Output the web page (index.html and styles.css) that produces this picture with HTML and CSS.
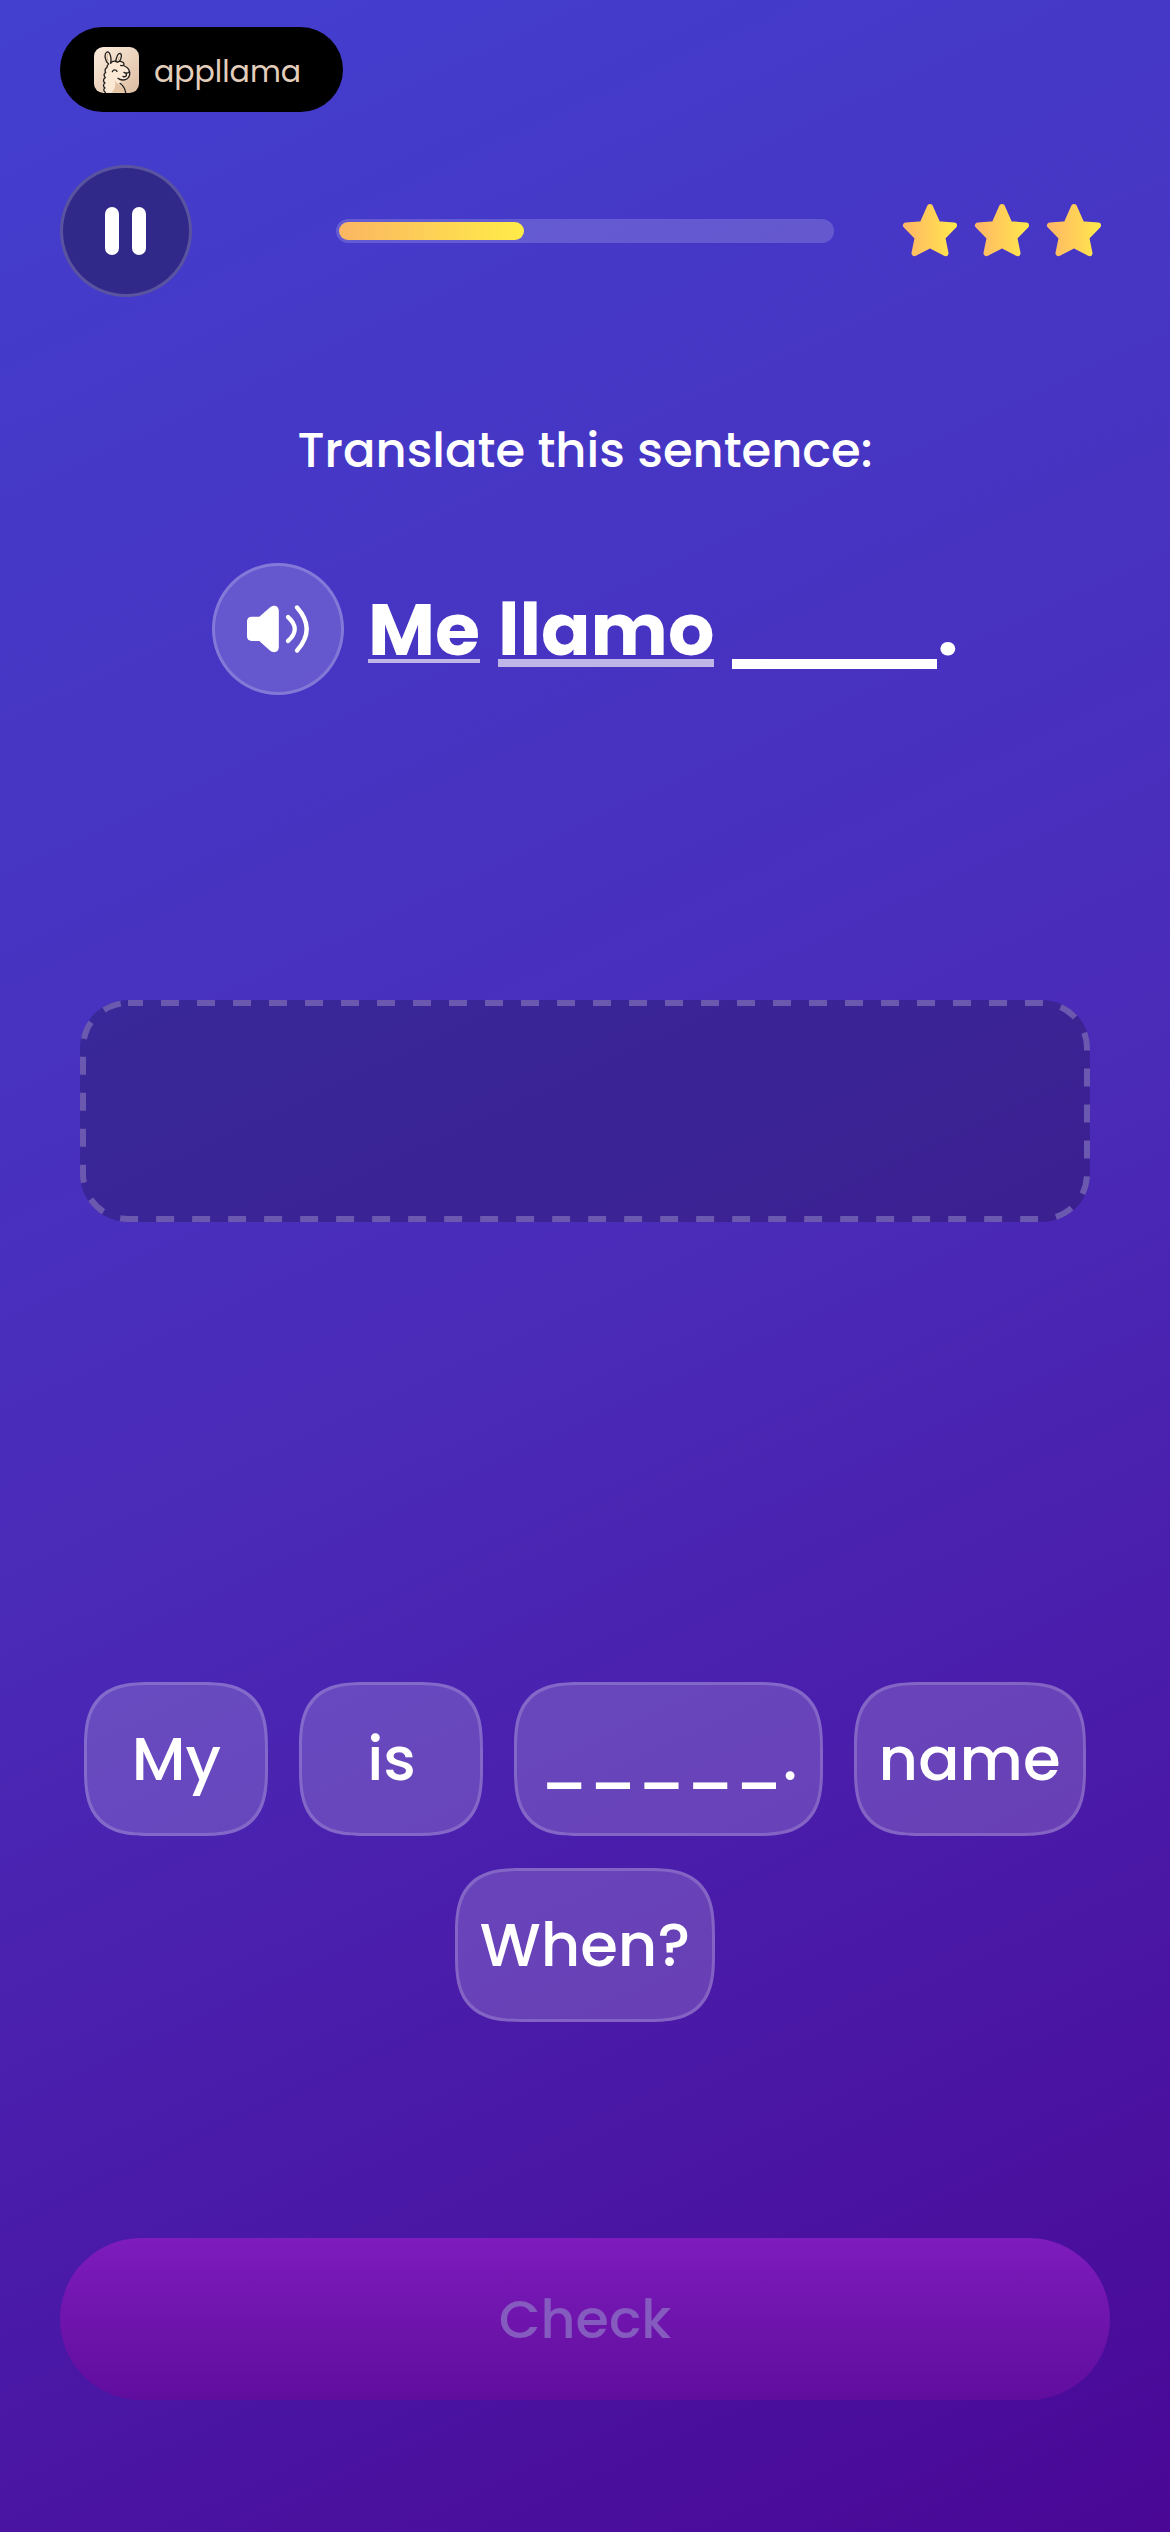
FILE: index.html
```
<!DOCTYPE html>
<html lang="en">
<head>
    <meta charset="UTF-8">
    <meta name="viewport" content="width=device-width, initial-scale=1.0">
    <title>Translate this sentence</title>
    <link rel="stylesheet" href="styles.css">
</head>
<body>
    <div class="badge">
        <svg class="badge-icon" viewBox="160 107 135 138" aria-hidden="true">
            <defs>
                <linearGradient id="cream" x1="0" y1="0" x2="1" y2="1">
                    <stop offset="0" stop-color="#fdeedf"/>
                    <stop offset="1" stop-color="#dcbc9f"/>
                </linearGradient>
            </defs>
            <rect x="160" y="107" width="135" height="138" rx="28" fill="url(#cream)"/>
            <path d="M191 244c-6-7-2-12 1-14c-7-6-4-13 0-16c-7-6-4-13 1-16c-6-6-4-13 1-15c-4-8 0-14 4-16c0-5 2-8 5-10c-10-8-14-28-4-34c9-4 14 18 11 31c5-3 10-3 15-3c2-11 7-25 14-24c7 2 3 18-2 24c9 1 15 6 12 12c10 3 20 16 17 28c-3 12-15 16-25 14c-5 10 11 18 13 39z" fill="#fbe9d6"/>
            <path d="M221 207c8 12 26 14 33 37h-42c12-12 15-24 9-37z" fill="#e3c3a3"/>
            <g fill="none" stroke="#22201f" stroke-width="4" stroke-linecap="round" stroke-linejoin="round">
                <path d="M194 243c-7-5-5-11-1-13c-7-5-5-12 0-15c-7-5-5-13 1-16c-6-6-4-13 1-15c-4-8 0-14 4-16c0-5 2-8 5-10c-11-8-15-31-5-36c9-3 14 19 11 33"/>
                <path d="M225 151c2-12 7-25 13-25c7 2 4 16-1 23"/>
                <path d="M210 155c6-7 16-7 20-2c7-6 20-2 20 5c0 5-6 6-10 4"/>
                <path d="M251 164c10 4 17 13 16 25c-1 11-10 17-20 17c-7 0-12-2-15-5"/>
                <path d="M215 181c3-7 11-7 14-1M250 183c5 3 11 3 15-1M257 185v8c-3 3-7 4-10 2"/>
                <path d="M238 216c9 7 15 16 17 27"/>
            </g>
            <path d="M202 148c-4-8-4-15-1-19M232 148c1-7 3-11 6-13" fill="none" stroke="#cfa98a" stroke-width="3" stroke-linecap="round"/>
        </svg>
        <span class="badge-name">appllama</span>
    </div>

    <header class="topbar">
        <button class="round-button round-button-dark" type="button" aria-label="Pause">
            <svg class="pause-icon" viewBox="0 0 42 48" aria-hidden="true">
                <rect x="0" y="0" width="14" height="48" rx="7" fill="#fff"/>
                <rect x="27" y="0" width="14" height="48" rx="7" fill="#fff"/>
            </svg>
        </button>
        <div class="progress" role="progressbar" aria-label="Lesson progress" aria-valuenow="37" aria-valuemin="0" aria-valuemax="100">
            <div class="progress-fill" style="width: 37.5%"></div>
        </div>
        <div class="stars" role="img" aria-label="3 stars">
            <svg class="star" viewBox="0 0 72 72">
                <defs>
                    <linearGradient id="gold" gradientUnits="userSpaceOnUse" x1="9" y1="0" x2="63" y2="0">
                        <stop offset="0" stop-color="#ffb566"/>
                        <stop offset="1" stop-color="#ffe94b"/>
                    </linearGradient>
                    <path id="star-shape" d="M36 12L43.600 29.200L60 30.500L48.300 42.500L51.500 58.200L36 50.200L20.500 58.200L23.700 42.500L12 30.500L28.400 29.200Z" fill="url(#gold)" stroke="url(#gold)" stroke-width="6" stroke-linejoin="round"/>
                </defs>
                <use href="#star-shape"/>
            </svg>
            <svg class="star" viewBox="0 0 72 72"><use href="#star-shape"/></svg>
            <svg class="star" viewBox="0 0 72 72"><use href="#star-shape"/></svg>
        </div>
    </header>

    <main class="lesson">
        <h1 class="prompt">Translate this sentence:</h1>

        <div class="sentence">
            <button class="round-button" type="button" aria-label="Listen">
                <svg class="sound-icon" viewBox="141 195 187 144" aria-hidden="true">
                    <path d="M155 230h23l32-28c12-10 27-5 27 10v110c0 15-15 19-27 10l-32-29h-23c-9 0-14-5-14-14v-45c0-9 5-14 14-14z" fill="#fff"/>
                    <path d="M265 231q40 36 0 72M292 202q58 65 0 130" fill="none" stroke="#fff" stroke-width="13" stroke-linecap="round"/>
                </svg>
            </button>
            <p class="words">
                <span class="word">Me</span>
                <span class="word word-new">llamo</span>
                <span class="blank" role="img" aria-label="blank"></span>
                <span>.</span>
            </p>
        </div>

        <div class="answer">
            <svg class="answer-outline" aria-hidden="true"><rect class="answer-dashes" x="3" y="3" rx="45"/></svg>
        </div>

        <div class="bank">
            <button class="chip" type="button">My</button>
            <button class="chip" type="button">is</button>
            <button class="chip" type="button">_____.</button>
            <button class="chip" type="button">name</button>
            <button class="chip" type="button">When?</button>
        </div>
    </main>

    <button class="check" type="button" disabled>Check</button>
</body>
</html>
```
FILE: styles.css
```
* {
    box-sizing: border-box;
}
body {
    display: flex;
    flex-direction: column;
    min-height: 100vh;
    margin: 0;
    padding: 27px 60px 132px;
    font-family: Poppins, Inter, sans-serif;
    font-weight: 500;
    color: #fff;
    background: linear-gradient(155deg, #433fcf 0%, #4a2cb9 50%, #4a0796 100%);
}
button {
    padding: 0;
    border: none;
    font-family: inherit;
    font-weight: inherit;
    color: inherit;
    cursor: pointer;
}
h1, p {
    margin: 0;
}
svg {
    display: block;
}

.badge {
    display: flex;
    align-items: center;
    align-self: flex-start;
    gap: 15px;
    height: 85px;
    padding: 0 42px 0 34px;
    border-radius: 43px;
    background: #000;
}
.badge-icon {
    width: 45px;
    height: 46px;
}
.badge-name {
    padding-top: 4px;
    font-weight: 400;
    font-size: 30px;
    line-height: 48px;
    color: #e3cdbb;
}

.topbar {
    display: flex;
    align-items: center;
    margin-top: 53px;
}
.round-button {
    display: flex;
    flex: none;
    align-items: center;
    justify-content: center;
    width: 132px;
    height: 132px;
    border: 3px solid rgba(255, 255, 255, 0.2);
    border-radius: 50%;
    background: rgba(255, 255, 255, 0.17);
}
.round-button-dark {
    background: #302989;
}
.pause-icon {
    width: 42px;
    height: 48px;
}
.progress {
    flex: 1;
    height: 24px;
    margin: 0 60px 0 144px;
    padding: 3px;
    border-radius: 12px;
    background: rgba(255, 255, 255, 0.17);
}
.progress-fill {
    height: 100%;
    border-radius: 9px;
    background: linear-gradient(90deg, #fbb663, #ffec48);
}
.stars {
    display: flex;
}
.star {
    width: 72px;
    height: 72px;
}

.lesson {
    display: flex;
    flex-direction: column;
}
.prompt {
    margin-top: 118px;
    font-size: 48px;
    font-weight: 500;
    line-height: 72px;
    text-align: center;
}
.sentence {
    display: flex;
    align-items: center;
    justify-content: center;
    gap: 24px;
    margin-top: 76px;
}
.sound-icon {
    width: 62px;
    height: 48px;
}
.words {
    display: flex;
    align-items: flex-start;
    padding-top: 12px;
    font-size: 73px;
    font-weight: 700;
    line-height: 58px;
}
.word {
    margin-right: 18px;
    border-bottom: 4px solid #bfb5e6;
}
.word-new {
    border-bottom-width: 8px;
}
.blank {
    width: 205px;
    height: 68px;
    border-bottom: 10px solid #fff;
}

.answer {
    height: 222px;
    margin: 305px 20px 0;
    border-radius: 48px;
    background: rgba(0, 0, 0, 0.2);
}
.answer-outline {
    width: 100%;
    height: 100%;
}
.answer-dashes {
    width: calc(100% - 6px);
    height: calc(100% - 6px);
    fill: none;
    stroke: #6b59b0;
    stroke-width: 6px;
    stroke-dasharray: 18px 18px;
    stroke-dashoffset: 3px;
}

.bank {
    display: flex;
    flex-wrap: wrap;
    justify-content: center;
    gap: 32px 31px;
    margin: 460px 20px 0;
}
.chip {
    min-width: 184px;
    height: 154px;
    padding: 0 22px 2px;
    border: 3px solid rgba(255, 255, 255, 0.18);
    border-radius: 56px;
    font-size: 61px;
    background: rgba(255, 255, 255, 0.17);
}

.check {
    height: 162px;
    margin-top: auto;
    border-radius: 81px;
    font-size: 54px;
    color: #855bbf;
    background: linear-gradient(#7e1cbd, #600d9d);
    cursor: default;
}

/* smoother corners where the browser has them */
@supports (corner-shape: superellipse(1.5)) {
    .chip {
        border-radius: 68px;
        corner-shape: superellipse(1.5);
    }
}
```
